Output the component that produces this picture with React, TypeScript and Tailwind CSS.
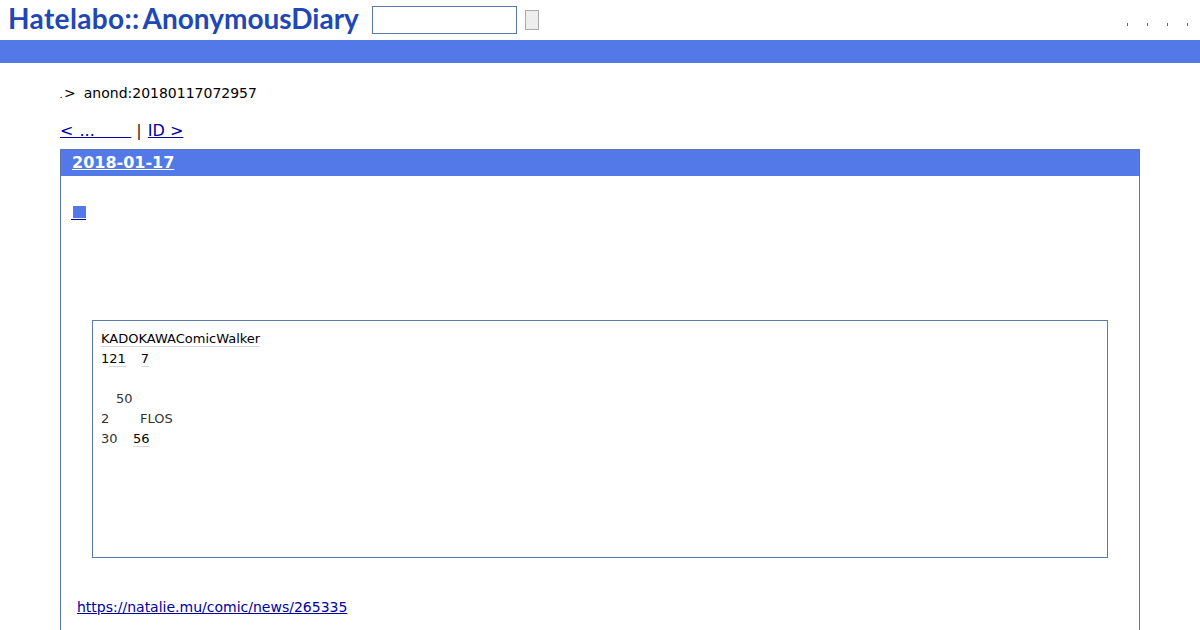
const dejavu = "font-['DejaVu_Sans',sans-serif]";

function Keyword({ children }: { children: React.ReactNode }) {
  return <span className="text-black border-b border-[#d8d8d8]">{children}</span>;
}

export default function App() {
  return (
    <div className={`${dejavu} w-[1200px] h-[630px] overflow-hidden bg-white text-black`}>
      {/* Header */}
      <div className="h-10 flex items-center pl-2">
        <a className="font-['Lato',sans-serif] font-bold text-[28px] leading-none text-[#2147b5] w-[364px] whitespace-nowrap flex gap-[3px] pb-1">
          <span className="tracking-[0.35px]">Hatelabo::</span>
          <span>AnonymousDiary</span>
        </a>
        <input className="w-[145px] h-7 border border-[#5a78a8] bg-white" />
        <button className="ml-2 w-3.5 h-5 border border-[#aaaaaa] bg-[#eeeeee]" />
        <div className="ml-auto mr-3 flex gap-[19px] pt-2">
          <span className="w-px h-[3px] bg-[#666666]" />
          <span className="w-px h-[3px] bg-[#666666]" />
          <span className="w-px h-[3px] bg-[#666666]" />
          <span className="w-px h-[3px] bg-[#666666]" />
        </div>
      </div>
      <div className="h-[23px] bg-[#5279e7]" />

      {/* Breadcrumb */}
      <div className="px-[60px]">
        <div className="mt-[21px] h-[18px] flex items-center text-sm leading-[18px]">
          <span className="text-[6px] self-end leading-[13px] w-[4px] font-bold">.</span>
          <span>&gt;</span>
          <span className="ml-2">anond:20180117072957</span>
        </div>

        {/* Prev / next */}
        <div className="mt-[19px] h-5 text-base leading-5 whitespace-pre text-[#222222]">
          <a className="text-[#0000a0] underline [word-spacing:1px]">{"< ...      "}</a>
          {" | "}
          <a className="text-[#0000a0] underline ml-px">ID &gt;</a>
        </div>

        {/* Day section */}
        <div className="mt-2 w-[1080px] border border-[#5a78a8] border-b-0 h-[600px]">
          <div className="h-[26px] bg-[#5279e7] pl-[11px] text-base font-bold leading-[25px] text-white">
            <a className="underline">2018-01-17</a>
          </div>

          <div className="mt-[26px] pl-2.5 h-5 flex">
            <a className="w-[15px] h-[18px] border-b border-[#0000a0] flex justify-end items-end pb-px">
              <span className="block w-[13px] h-3 bg-[#5279e7]" />
            </a>
          </div>

          <div className="ml-[31px] mt-[98px] w-[1016px] h-[238px] border border-[#5a78a8] pl-2 pt-2 text-[13px] leading-5 text-[#333333]">
            <div><Keyword>KADOKAWAComicWalker</Keyword></div>
            <div className="whitespace-pre">
              <span className="text-black">1</span>
              <Keyword>21</Keyword>
              <span className="inline-block w-[15px]" />
              <Keyword>7</Keyword>
            </div>
            <div className="h-5" />
            <div className="pl-[15px]">50</div>
            <div className="flex">
              <span className="w-[39px]">2</span>
              <span>FLOS</span>
            </div>
            <div>
              <span className="inline-block w-8">30</span>
              <Keyword>56</Keyword>
            </div>
          </div>

          <div className="mt-10 pl-4 text-sm leading-[18px]">
            <a className="text-[#0000a0] underline">https://natalie.mu/comic/news/265335</a>
          </div>
        </div>
      </div>
    </div>
  );
}
